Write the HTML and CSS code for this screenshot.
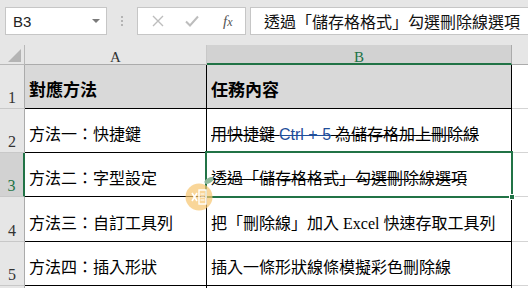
FILE: index.html
```html
<!DOCTYPE html>
<html>
<head>
<meta charset="utf-8">
<link rel="stylesheet" href="styles.css">
</head>
<body>
<div class="toolbar">
  <div class="namebox"><span class="nb-text">B3</span><span class="nb-arrow"></span></div>
  <div class="sep"><i></i><i></i><i></i></div>
  <div class="fxbox">
    <svg class="ico" width="14" height="14" viewBox="0 0 14 14"><path d="M2 2L12 12M12 2L2 12" stroke="#bdbdbd" stroke-width="1.4" fill="none"/></svg>
    <svg class="ico" width="16" height="14" viewBox="0 0 16 14"><path d="M2 7.5L6 11.5L14 2.5" stroke="#bdbdbd" stroke-width="2" fill="none"/></svg>
    <span class="fx">f<span class="x">x</span></span>
  </div>
  <div class="formula">透過「儲存格格式」勾選刪除線選項</div>
</div>
<div class="sheet">
  <div class="corner"><span class="tri"></span></div>
  <div class="colhead">A</div>
  <div class="colhead sel">B</div>
  <div class="colhead rest"></div>

  <div class="rowhead">1</div>
  <div class="cell head">對應方法</div>
  <div class="cell head">任務內容</div>
  <div class="cell rest"></div>

  <div class="rowhead">2</div>
  <div class="cell">方法一：快捷鍵</div>
  <div class="cell"><span class="strike">用快捷鍵 <span class="ctrl">Ctrl + 5</span> 為儲存格加上刪除線</span></div>
  <div class="cell rest"></div>

  <div class="rowhead sel">3</div>
  <div class="cell">方法二：字型設定</div>
  <div class="cell active"><span class="strike">透過「儲存格格式」勾選刪除線選項</span><span class="selbox"><span class="handle"></span></span></div>
  <div class="cell rest"></div>

  <div class="rowhead">4</div>
  <div class="cell">方法三：自訂工具列</div>
  <div class="cell">把「刪除線」加入 Excel 快速存取工具列</div>
  <div class="cell rest"></div>

  <div class="rowhead">5</div>
  <div class="cell">方法四：插入形狀</div>
  <div class="cell">插入一條形狀線條模擬彩色刪除線</div>
  <div class="cell rest"></div>

  <div class="rowhead last"></div>
  <div class="cell last"></div>
  <div class="cell last"></div>
  <div class="cell rest last"></div>

  <div class="mark">
    <svg width="28" height="28" viewBox="0 0 28 28">
      <circle cx="14" cy="14" r="13.5" fill="#f6c46e" fill-opacity="0.7"/>
      <path d="M7 10L12 18M12 10L7 18" stroke="#fff" stroke-width="1.6"/>
      <rect x="14" y="7" width="7" height="14" fill="none" stroke="#fff" stroke-width="1.4"/>
      <path d="M15.5 11H19.5M15.5 14H19.5M15.5 17H19.5" stroke="#fff" stroke-width="1.2"/>
    </svg>
    <span class="leaf"></span>
  </div>
</div>
</body>
</html>
```
FILE: styles.css
```css
* { box-sizing: border-box; }
html, body { margin: 0; padding: 0; }
body {
  width: 528px;
  height: 288px;
  overflow: hidden;
  background: #fff;
  font-family: "Liberation Serif", "Noto Sans CJK TC", serif;
}
.toolbar {
  height: 45px;
  background: #e6e6e6;
  display: flex;
  align-items: flex-start;
  padding-top: 7px;
  padding-left: 5px;
}
.namebox {
  width: 102px;
  height: 28px;
  background: #fff;
  border: 1px solid #c6c6c6;
  display: flex;
  align-items: center;
  justify-content: space-between;
  padding: 0 6px 0 7px;
}
.nb-text {
  font-family: "Liberation Sans", sans-serif;
  font-size: 15px;
  color: #222;
}
.nb-arrow {
  width: 0; height: 0;
  border-left: 4px solid transparent;
  border-right: 4px solid transparent;
  border-top: 4px solid #7a7a7a;
}
.sep {
  width: 30px;
  height: 28px;
  display: flex;
  flex-direction: column;
  align-items: center;
  justify-content: center;
  gap: 2px;
}
.sep i {
  display: block;
  width: 2px;
  height: 2px;
  background: #b4b4b4;
}
.fxbox {
  width: 109px;
  height: 28px;
  background: #fff;
  border: 1px solid #c6c6c6;
  display: flex;
  align-items: center;
  padding-left: 13px;
  gap: 19px;
}
.fx {
  font-family: "Liberation Serif", serif;
  font-style: italic;
  font-size: 15px;
  color: #555;
  margin-left: 4px;
}
.fx .x { font-size: 12px; }
.formula {
  flex: 1;
  margin-left: 4px;
  height: 28px;
  background: #fff;
  border: 1px solid #c6c6c6;
  border-right: none;
  font-family: "Noto Sans CJK TC", sans-serif;
  font-size: 16px;
  line-height: 26px;
  padding-left: 13px;
  white-space: nowrap;
  overflow: hidden;
  color: #111;
}
.sheet {
  position: relative;
  display: grid;
  grid-template-columns: 25px 182px 305px 1fr;
  grid-template-rows: 20px 44px 44px 44px 45px 44px 1fr;
  height: 243px;
}
.corner {
  background: #e6e6e6;
  border-right: 1px solid #b8b8b8;
  border-bottom: 1px solid #b8b8b8;
  position: relative;
}
.tri {
  position: absolute;
  right: 3px;
  bottom: 2px;
  width: 0; height: 0;
  border-left: 13px solid transparent;
  border-bottom: 13px solid #b4b4b4;
}
.colhead {
  background: #e6e6e6;
  border-bottom: 1px solid #ababab;
  border-right: 1px solid #c8c8c8;
  text-align: center;
  font-family: "Liberation Serif", serif;
  font-size: 15px;
  line-height: 24px;
  color: #333;
}
.colhead.sel {
  background: #d2d2d2;
  color: #217346;
  border-bottom: 2px solid #217346;
  border-right: 1px solid #ababab;
}
.colhead.rest { border-right: none; }
.rowhead {
  background: #e6e6e6;
  border-right: 1px solid #ababab;
  border-bottom: 1px solid #c8c8c8;
  display: flex;
  align-items: flex-end;
  justify-content: center;
  font-family: "Liberation Serif", serif;
  font-size: 16px;
  line-height: 18px;
  padding-bottom: 1px;
  color: #333;
}
.rowhead.sel {
  background: #d2d2d2;
  color: #217346;
  border-right: 2px solid #217346;
}
.cell {
  border-right: 1px solid #000;
  border-bottom: 1px solid #000;
  display: flex;
  align-items: flex-end;
  padding: 0 0 6px 4px;
  font-size: 16px;
  line-height: 23px;
  color: #000;
  white-space: nowrap;
}
.cell.head {
  background: #d9d9d9;
  font-weight: bold;
  font-size: 17px;
}
.cell.rest {
  border-right: none;
  border-bottom: 1px solid #d4d4d4;
}
.cell.last, .rowhead.last { border-bottom: none; }
.strike { text-decoration: line-through; text-decoration-thickness: 1px; }
.strike .ctrl {
  font-family: "Liberation Sans", sans-serif;
  color: #1f4e9a;
  text-decoration: line-through;
}
.active { position: relative; }
.selbox {
  position: absolute;
  left: -2px;
  top: -2px;
  right: -2px;
  bottom: -2px;
  border: 2px solid #217346;
}
.handle {
  position: absolute;
  right: -4px;
  bottom: -4px;
  width: 6px;
  height: 6px;
  background: #217346;
  border: 1px solid #fff;
}
.mark {
  position: absolute;
  left: 185px;
  top: 138px;
}
.mark svg { display: block; }
.leaf {
  position: absolute;
  left: 19px;
  top: -5px;
  width: 10px;
  height: 5px;
  border-radius: 50%;
  background: #8db89a;
  transform: rotate(-30deg);
}
```
